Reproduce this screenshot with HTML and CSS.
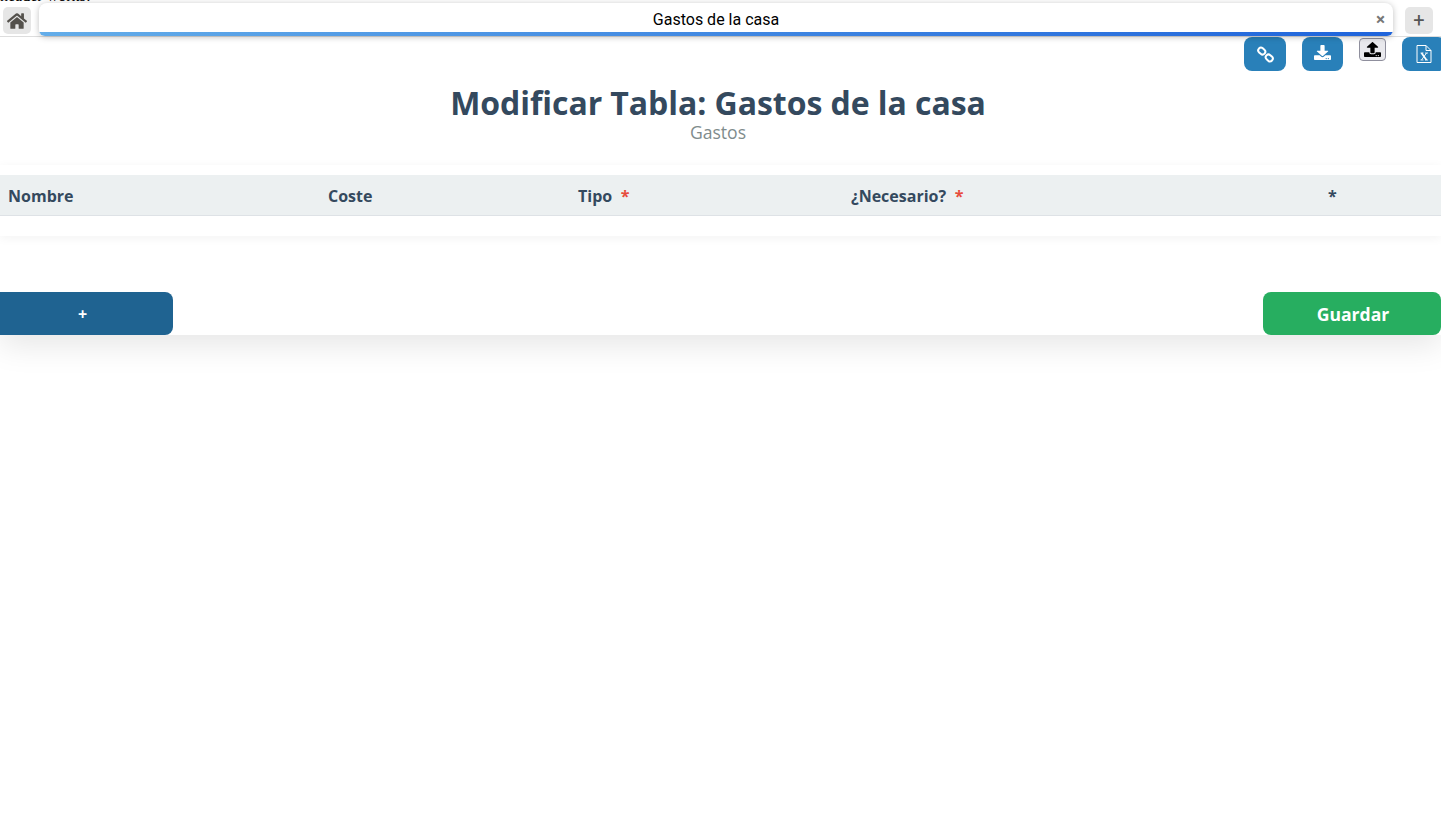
FILE: index.html
```html
<!DOCTYPE html>
<html lang="es">
  <head>
    <meta charset="UTF-8" />
    <meta name="viewport" content="width=device-width, initial-scale=1.0" />
    <title>Gastos de la casa</title>
    <link rel="stylesheet" href="styles.css">
  </head>
  <body>
    <p class="header-note"><span>header works!</span></p>

    <div class="tab-bar">
      <button class="tab-home" type="button" aria-label="Inicio">
        <svg width="20" height="18" viewBox="0 0 576 512"><path fill="#54514c" d="M280.37 148.26L96 300.11V464a16 16 0 0 0 16 16l112.06-.29a16 16 0 0 0 15.92-16V368a16 16 0 0 1 16-16h64a16 16 0 0 1 16 16v95.64a16 16 0 0 0 16 16.05L464 480a16 16 0 0 0 16-16V300L295.67 148.26a12.19 12.19 0 0 0-15.3 0zM571.6 251.47L488 182.56V44.05a12 12 0 0 0-12-12h-56a12 12 0 0 0-12 12v72.61L318.47 43a48 48 0 0 0-61 0L4.34 251.47a12 12 0 0 0-1.6 16.9l25.5 31A12 12 0 0 0 45.15 301l235.22-193.74a12.19 12.19 0 0 1 15.3 0L530.9 301a12 12 0 0 0 16.9-1.6l25.5-31a12 12 0 0 0-1.7-16.93z"/></svg>
      </button>
      <div class="tab">
        <span class="tab-title">Gastos de la casa</span>
        <span class="tab-close">×</span>
      </div>
      <button class="tab-add" type="button">+</button>
    </div>

    <main class="panel">
      <div class="tools">
        <button class="tool tool-link" type="button" aria-label="Enlace">
          <svg width="17" height="17" viewBox="0 0 17 17" fill="none" stroke="#fff" stroke-width="2"><rect x="1" y="2.300" width="7.500" height="5.500" rx="2.700" transform="rotate(42 4.750 5.050)"/><rect x="8.500" y="9.200" width="7.500" height="5.500" rx="2.700" transform="rotate(42 12.250 11.950)"/></svg>
        </button>
        <button class="tool tool-down" type="button" aria-label="Descargar">
          <svg width="17" height="15" viewBox="0 0 512 512" preserveAspectRatio="none"><path fill="#fff" d="M216 0h80c13.300 0 24 10.700 24 24v168h87.700c17.800 0 26.700 21.500 14.100 34.100L269.700 378.300c-7.500 7.500-19.800 7.500-27.300 0L90.100 226.100c-12.600-12.600-3.700-34.100 14.100-34.100H192V24c0-13.300 10.700-24 24-24zm296 376v112c0 13.300-10.700 24-24 24H24c-13.300 0-24-10.700-24-24V376c0-13.300 10.700-24 24-24h146.700l49 49c20.100 20.100 52.500 20.100 72.600 0l49-49H488c13.300 0 24 10.700 24 24zm-124 88c0-11-9-20-20-20s-20 9-20 20 9 20 20 20 20-9 20-20zm64 0c0-11-9-20-20-20s-20 9-20 20 9 20 20 20 20-9 20-20z"/></svg>
        </button>
        <button class="tool-upload" type="button" aria-label="Subir">
          <svg width="17" height="15" viewBox="0 0 512 512" preserveAspectRatio="none"><path fill="#000" d="M296 384h-80c-13.300 0-24-10.700-24-24V192h-87.700c-17.800 0-26.700-21.500-14.100-34.100L242.300 5.700c7.500-7.500 19.800-7.500 27.300 0l152.200 152.200c12.600 12.600 3.700 34.100-14.100 34.100H320v168c0 13.300-10.700 24-24 24zm216-8v112c0 13.300-10.700 24-24 24H24c-13.300 0-24-10.700-24-24V376c0-13.300 10.700-24 24-24h136v8c0 30.900 25.100 56 56 56h80c30.900 0 56-25.100 56-56v-8h136c13.300 0 24 10.700 24 24zm-124 88c0-11-9-20-20-20s-20 9-20 20 9 20 20 20 20-9 20-20zm64 0c0-11-9-20-20-20s-20 9-20 20 9 20 20 20 20-9 20-20z"/></svg>
        </button>
        <button class="tool tool-excel" type="button" aria-label="Excel">
          <svg width="16" height="18" viewBox="0 0 16 18" fill="none" stroke="#fff" stroke-width="1"><path d="M1 .5h9l5 5v12H1zM10 .5v5h5"/><path d="M4.500 8h3M9 8h3M4.500 15h3M9 15h3" stroke-width=".8"/><path d="M5.500 8l5 7" stroke-width="1.700"/><path d="M10.500 8l-5 7" stroke-width=".9"/></svg>
        </button>
      </div>

      <header class="page-head">
        <h1>Modificar Tabla: Gastos de la casa</h1>
        <p>Gastos</p>
      </header>

      <div class="table-card">
        <table class="grid">
          <thead>
            <tr>
              <th class="col-name">Nombre</th>
              <th class="col-cost">Coste</th>
              <th class="col-type">Tipo <span class="req">*</span></th>
              <th class="col-need">¿Necesario? <span class="req">*</span></th>
              <th>*</th>
            </tr>
          </thead>
        </table>
      </div>

      <div class="actions">
        <button class="btn-add" type="button">+</button>
        <button class="btn-save" type="button">Guardar</button>
      </div>
    </main>
  </body>
</html>
```

FILE: styles.css
```css
* {
  margin: 0;
  padding: 0;
  box-sizing: border-box;
}

html,
body {
  height: 100%;
  overflow: hidden;
}

body {
  background: #fff;
  font-family: "Open Sans", sans-serif;
  color: #2c3e50;
}

button {
  border: none;
  font-family: inherit;
  cursor: pointer;
}

.header-note {
  display: flex;
  align-items: flex-end;
  height: 3px;
  overflow: hidden;
  font-family: "Liberation Serif", serif;
  font-size: 16px;
  line-height: 16px;
  color: #000;
}

.header-note span {
  flex: none;
  margin-bottom: -1px;
}

/* pestañas */
.tab-bar {
  position: relative;
  z-index: 2;
  display: flex;
  align-items: flex-start;
  height: 34px;
  background: #fff;
  border-bottom: 1px solid #ddd;
}

.tab-home {
  display: flex;
  align-items: center;
  justify-content: center;
  width: 28px;
  height: 27px;
  margin: 4px 0 0 3px;
  background: #e6e6e6;
  border-radius: 5px;
}

.tab {
  position: relative;
  display: flex;
  align-items: center;
  justify-content: center;
  width: 1354px;
  height: 33px;
  margin-left: 8px;
  background: #fff;
  border-radius: 8px 8px 6px 6px;
  box-shadow: 0 1px 6px rgba(0, 0, 0, 0.25);
  overflow: hidden;
}

.tab::after {
  content: "";
  position: absolute;
  left: 0;
  right: 0;
  bottom: 0;
  height: 4px;
  background: linear-gradient(90deg, #63ade9, #1f64db);
}

.tab-title {
  font-family: Roboto, sans-serif;
  font-size: 16px;
  color: #000;
}

.tab-close {
  position: absolute;
  top: 6px;
  right: 8px;
  font-family: Roboto, sans-serif;
  font-size: 17px;
  font-weight: bold;
  line-height: 20px;
  color: #777;
}

.tab-add {
  width: 28px;
  height: 27px;
  margin: 4px 0 0 12px;
  background: #e6e6e6;
  border-radius: 5px;
  font-family: Roboto, sans-serif;
  font-size: 20px;
  line-height: 27px;
  color: #555;
}

/* contenido */
.panel {
  height: 298px;
  background: #fff;
  box-shadow: 0 10px 30px rgba(0, 0, 0, 0.1);
}

.tools {
  display: flex;
  align-items: flex-start;
  height: 34px;
  margin-right: -5px;
  justify-content: flex-end;
}

.tool {
  display: flex;
  align-items: center;
  justify-content: center;
  height: 34px;
  background: #2980b9;
  border-radius: 8px;
}

.tool-link {
  width: 42px;
}

.tool-down {
  width: 41px;
  margin-left: 16px;
  padding-bottom: 3px;
}

.tool-upload {
  display: flex;
  align-items: center;
  justify-content: center;
  width: 27px;
  height: 23px;
  margin: 1px 0 0 16px;
  background: #e9e9ed;
  border: 1px solid #8f8f9d;
  border-radius: 4px;
}

.tool-excel {
  width: 44px;
  margin-left: 16px;
}

.page-head {
  padding: 13px 5px 0 0;
  text-align: center;
}

.page-head h1 {
  font-size: 32px;
  font-weight: 700;
  line-height: 38px;
  letter-spacing: -0.06px;
  color: #34495e;
}

.page-head p {
  font-size: 17.600px;
  line-height: 20px;
  color: #7f8c8d;
}

.table-card {
  height: 71px;
  margin-top: 23px;
  padding-top: 10px;
  background: #fff;
  box-shadow: 0 2px 10px rgba(0, 0, 0, 0.05);
}

.grid {
  width: 100%;
  border-collapse: collapse;
  table-layout: fixed;
}

.grid th {
  height: 40px;
  padding: 2px 0 0 8px;
  background: #ecf0f1;
  border-bottom: 1px solid #dee2e6;
  font-size: 16px;
  font-weight: 700;
  text-align: left;
  color: #34495e;
}

.col-name {
  width: 320px;
}

.col-cost {
  width: 250px;
}

.col-type {
  width: 273px;
}

.col-need {
  width: 477px;
}

.req {
  margin-left: 4.500px;
  color: #e74c3c;
}

.actions {
  display: flex;
  justify-content: space-between;
  margin-top: 56px;
}

.btn-add,
.btn-save {
  height: 43px;
  border-radius: 8px;
  color: #fff;
  font-weight: 700;
}

.btn-add {
  width: 181px;
  margin-left: -8px;
  background: #1f6391;
  font-size: 16px;
}

.btn-save {
  width: 178px;
  padding-left: 2px;
  background: #27ae60;
  font-size: 17.600px;
}
```
